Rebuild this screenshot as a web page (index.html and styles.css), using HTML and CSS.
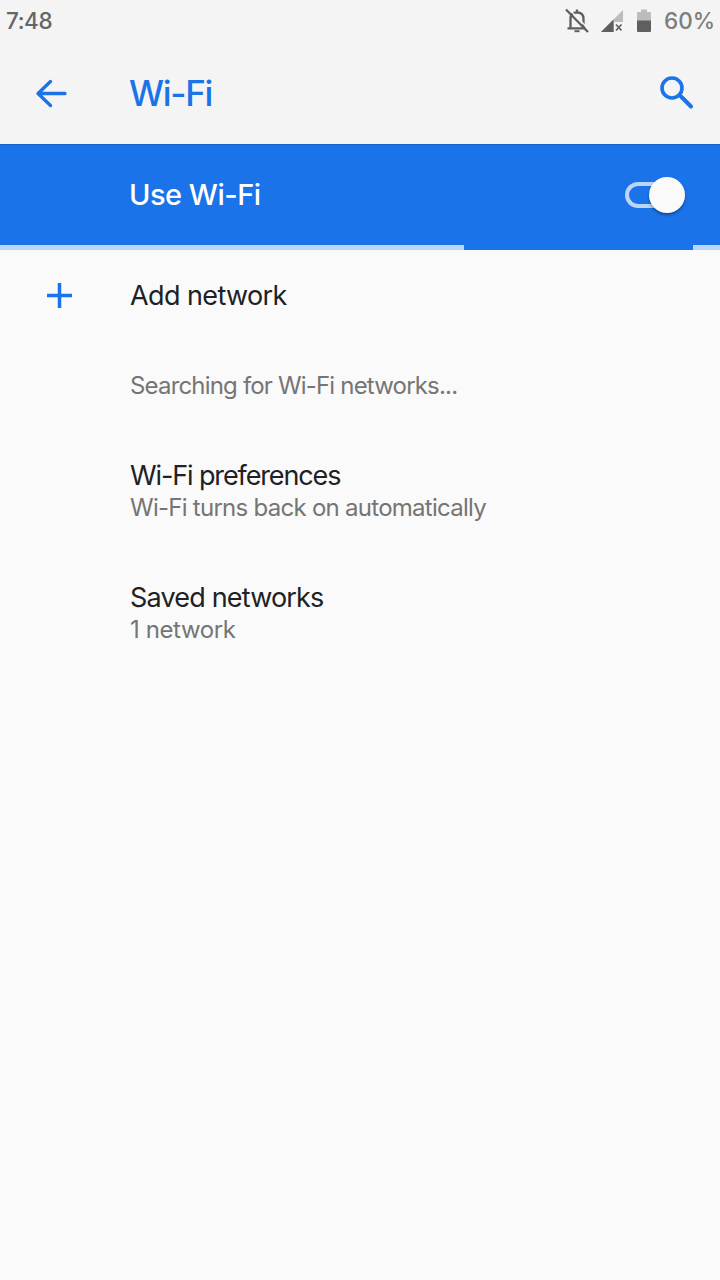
FILE: index.html
```html
<!DOCTYPE html>
<html lang="en">
<head>
<meta charset="utf-8">
<title>Wi-Fi</title>
<link rel="stylesheet" href="styles.css">
</head>
<body>
<header class="top">
  <div class="status">
    <span class="clock">7:48</span>
    <svg class="bell" width="26" height="26" viewBox="0 0 26 26" fill="none" stroke="#5f5f5f" stroke-width="2.3">
      <path d="M6.500 20V11Q6.500 4.500 13 4.500T19.500 11V20M3.500 20.300H21.500M13 4.500V1.500"/>
      <path d="M10.500 23.200H15.500" stroke-width="2"/>
      <path d="M4 0L26 22.500" stroke="#f4f4f4" stroke-width="1.500"/>
      <path d="M2 1.500L24 24"/>
    </svg>
    <svg class="signal" width="22" height="22" viewBox="0 0 22 22">
      <path d="M22 0V12H13V22H0Z" fill="#bcbcbc"/>
      <path d="M12.500 9.500V22H0Z" fill="#5f5f5f"/>
      <path d="M15 14.500L20.500 20.500M20.500 14.500L15 20.500" stroke="#5f5f5f" stroke-width="1.700"/>
    </svg>
    <svg class="battery" width="14" height="24" viewBox="0 0 14 24">
      <path d="M4 0.500H10V3H13Q14 3 14 4V12H0V4Q0 3 1 3H4Z" fill="#bcbcbc"/>
      <path d="M0 11.500H14V22Q14 23 13 23H1Q0 23 0 22Z" fill="#5f5f5f"/>
    </svg>
    <span class="percent">60%</span>
  </div>
  <div class="toolbar">
    <svg class="back" width="32" height="30" viewBox="0 0 32 30" fill="none" stroke="#1a73e8" stroke-width="3.300" stroke-linecap="round" stroke-linejoin="round">
      <path d="M30 15.500H3M15.500 3.500L3 15.500L15.500 27.500"/>
    </svg>
    <h1 class="title">Wi-Fi</h1>
    <svg class="search" width="34" height="34" viewBox="0 0 34 34" fill="none" stroke="#1a73e8">
      <circle cx="12" cy="12" r="10" stroke-width="3.600"/>
      <path d="M21 20.500L31 30.500" stroke-width="4" stroke-linecap="round"/>
    </svg>
  </div>
</header>
<section class="switchbar">
  <div class="switchrow">
    <span class="switchlabel">Use Wi-Fi</span>
    <span class="toggle"><span class="thumb"></span></span>
  </div>
  <div class="progress"><span class="bar"></span><span class="bar tail"></span></div>
</section>
<main class="list">
  <div class="row single">
    <svg class="plus" width="26" height="26" viewBox="0 0 26 26"><path d="M12.500 0V25M0 12.500H25" stroke="#1a73e8" stroke-width="3.500"/></svg>
    <span class="name add">Add network</span>
  </div>
  <div class="row single"><span class="note searching">Searching for Wi-Fi networks...</span></div>
  <div class="row double">
    <span class="name prefs">Wi-Fi preferences</span>
    <span class="note auto">Wi-Fi turns back on automatically</span>
  </div>
  <div class="row double">
    <span class="name saved">Saved networks</span>
    <span class="note count">1 network</span>
  </div>
</main>
</body>
</html>
```
FILE: styles.css
```css
* { box-sizing: border-box; }
body {
  margin: 0;
  height: 1280px;
  overflow: hidden;
  background: #fafafa;
  font-family: Inter, "Liberation Sans", sans-serif;
  white-space: nowrap;
}
svg { display: block; flex: none; }
.top { height: 144px; background: #f4f4f4; }
.status {
  display: flex;
  align-items: center;
  height: 42px;
  padding: 0 5px 0 6px;
  color: #666;
  font-size: 22.500px;
  font-weight: 500;
  line-height: 26px;
}
.clock { flex: none; width: 558px; letter-spacing: -0.4px; }
.bell { margin-right: 11px; }
.signal { margin-right: 14px; }
.battery { margin-right: 13px; }
.percent { padding-bottom: 1px; color: #7d7d7d; }
.toolbar {
  display: flex;
  align-items: center;
  height: 102px;
  padding: 0 26px 0 35px;
}
.title {
  flex: 1;
  margin: 0 0 0 62px;
  color: #1a73e8;
  font-size: 35px;
  font-weight: 550;
  letter-spacing: -1.3px;
  line-height: 44px;
}
.switchbar {
  display: flex;
  flex-direction: column;
  height: 106px;
  background: #1a73e8;
  box-shadow: inset 0 2px 1px -1px #1764cb;
}
.switchrow {
  display: flex;
  flex: 1;
  align-items: center;
  justify-content: space-between;
  padding: 0 35px 0 129px;
}
.switchlabel {
  color: #fff;
  font-size: 29px;
  font-weight: 550;
  letter-spacing: -0.5px;
}
.toggle {
  display: flex;
  align-items: center;
  width: 60px;
  height: 26px;
  padding-left: 20px;
  border: 4px solid #bad5f8;
  border-right: 0;
  border-radius: 13px;
}
.thumb {
  flex: none;
  width: 36px;
  height: 36px;
  border-radius: 50%;
  background: #fafafa;
  box-shadow: 0 2px 3px rgba(0, 0, 0, .35);
}
.progress { display: flex; justify-content: space-between; height: 5px; }
.bar { width: 464px; background: #bad5f8; }
.tail { width: 27px; }
.row { display: flex; padding-left: 130px; }
.single { height: 90px; align-items: center; }
.single .name, .single .note { padding-top: 2px; }
.double {
  flex-direction: column;
  align-items: flex-start;
  height: 122px;
  padding-top: 30px;
}
.plus { margin: 1px 57px 0 -83px; }
.name { color: #202124; font-size: 27px; line-height: 32px; }
.note { color: #757575; font-size: 24px; line-height: 32px; }
.add { letter-spacing: -0.6px; }
.searching { letter-spacing: -0.82px; }
.prefs { letter-spacing: -1.12px; }
.auto { letter-spacing: -0.73px; }
.saved { letter-spacing: -0.82px; }
.count { letter-spacing: -0.4px; }
```
